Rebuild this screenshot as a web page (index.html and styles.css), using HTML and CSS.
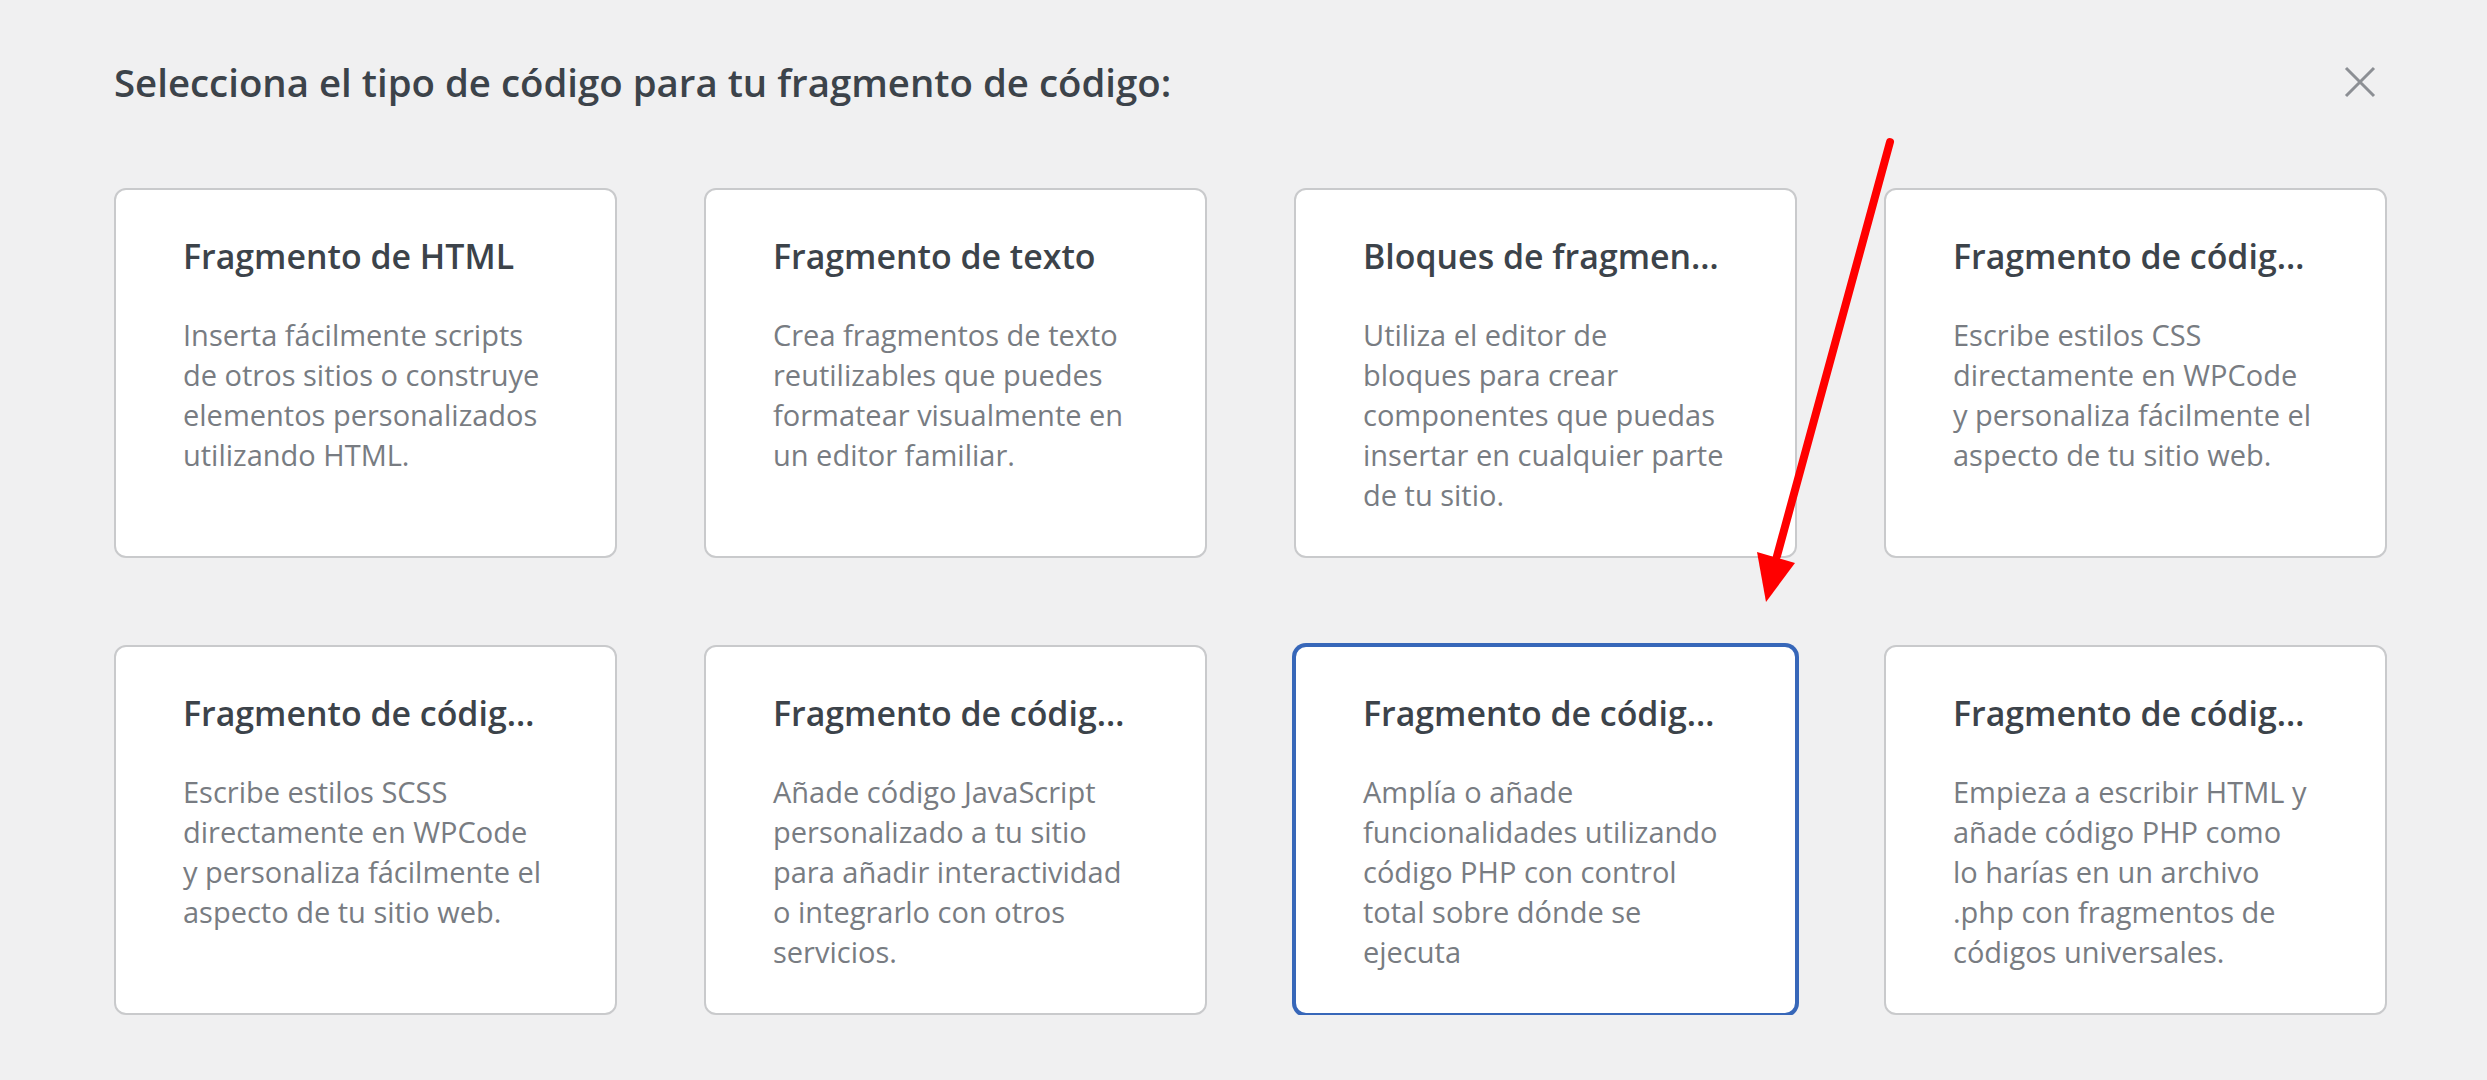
FILE: index.html
```html
<!DOCTYPE html>
<html lang="es">
<head>
    <meta charset="UTF-8">
    <meta name="viewport" content="width=device-width, initial-scale=1.0">
    <title>WPCode - Tipo de fragmento</title>
    <link rel="stylesheet" href="styles.css">
</head>
<body>
    <div class="modal">
        <div class="modal-header">
            <h2>Selecciona el tipo de código para tu fragmento de código:</h2>
            <button class="close-button" aria-label="Cerrar">
                <svg viewBox="0 0 32 32" width="32" height="32">
                    <path d="M2 2 L30 30 M30 2 L2 30" stroke="currentColor" stroke-width="3" fill="none"/>
                </svg>
            </button>
        </div>

        <div class="snippet-types">
            <div class="snippet-type">
                <h3>Fragmento de HTML</h3>
                <p>Inserta fácilmente scripts de otros sitios o construye elementos personalizados utilizando HTML.</p>
            </div>
            <div class="snippet-type">
                <h3>Fragmento de texto</h3>
                <p>Crea fragmentos de texto reutilizables que puedes formatear visualmente en un editor familiar.</p>
            </div>
            <div class="snippet-type">
                <h3>Bloques de fragmentos</h3>
                <p>Utiliza el editor de<br>bloques para crear componentes que puedas insertar en cualquier parte de tu sitio.</p>
            </div>
            <div class="snippet-type">
                <h3>Fragmento de código CSS</h3>
                <p>Escribe estilos CSS directamente en WPCode y&nbsp;personaliza fácilmente el aspecto de tu sitio web.</p>
            </div>
            <div class="snippet-type">
                <h3>Fragmento de código SCSS</h3>
                <p>Escribe estilos SCSS directamente en WPCode y&nbsp;personaliza fácilmente el aspecto de tu sitio web.</p>
            </div>
            <div class="snippet-type">
                <h3>Fragmento de código JavaScript</h3>
                <p>Añade código JavaScript personalizado a tu sitio para añadir interactividad o integrarlo con otros servicios.</p>
            </div>
            <div class="snippet-type selected">
                <h3>Fragmento de código PHP</h3>
                <p>Amplía o añade funcionalidades utilizando código PHP con control total sobre dónde se ejecuta</p>
            </div>
            <div class="snippet-type">
                <h3>Fragmento de código universal</h3>
                <p>Empieza a escribir HTML y añade código PHP como<br>lo harías en un archivo .php con fragmentos de códigos universales.</p>
            </div>
        </div>
    </div>

    <!-- annotation arrow pointing at the PHP card -->
    <svg class="annotation" viewBox="0 0 2487 1080" width="2487" height="1080">
        <line x1="1890" y1="142" x2="1777" y2="556" stroke="#ff0000" stroke-width="8" stroke-linecap="round"/>
        <polygon points="1757,552 1795,563 1766,602" fill="#ff0000"/>
    </svg>
</body>
</html>
```
FILE: styles.css
```css
body {
    font-family: "Open Sans", "Noto Sans", sans-serif;
    margin: 0;
    background-color: #f0f0f1;
    color: #3c434a;
}

.modal {
    padding: 59px 100px 0 114px;
}

.modal-header {
    display: flex;
    justify-content: space-between;
    align-items: center;
    margin-bottom: 83px;
}

h2 {
    margin: 0;
    font-size: 38.4px;
    font-weight: 600;
    line-height: 46px;
    color: #3c434a;
}

.close-button {
    width: 32px;
    height: 32px;
    padding: 0;
    margin-right: 11px;
    border: none;
    background: none;
    color: #8c8f94;
    cursor: pointer;
}

.close-button svg {
    display: block;
}

.snippet-types {
    display: grid;
    grid-template-columns: repeat(4, 503px);
    grid-auto-rows: 370px;
    gap: 87px;
}

.snippet-type {
    box-sizing: border-box;
    padding: 44px 67px 0 67px;
    background-color: #fff;
    border: 2px solid #c9cacc;
    border-radius: 12px;
    cursor: pointer;
}

.snippet-type.selected {
    border-color: #3767b9;
    box-shadow: 0 0 0 2px #3767b9;
}

.snippet-type h3 {
    margin: 0 -2px 37px 0;
    font-size: 33.9px;
    font-weight: 600;
    line-height: 44px;
    color: #3c434a;
    white-space: nowrap;
    overflow: hidden;
    text-overflow: ellipsis;
}

.snippet-type p {
    margin: 0;
    font-size: 29px;
    line-height: 40px;
    color: #787c82;
}

.annotation {
    position: absolute;
    top: 0;
    left: 0;
    pointer-events: none;
}
```
